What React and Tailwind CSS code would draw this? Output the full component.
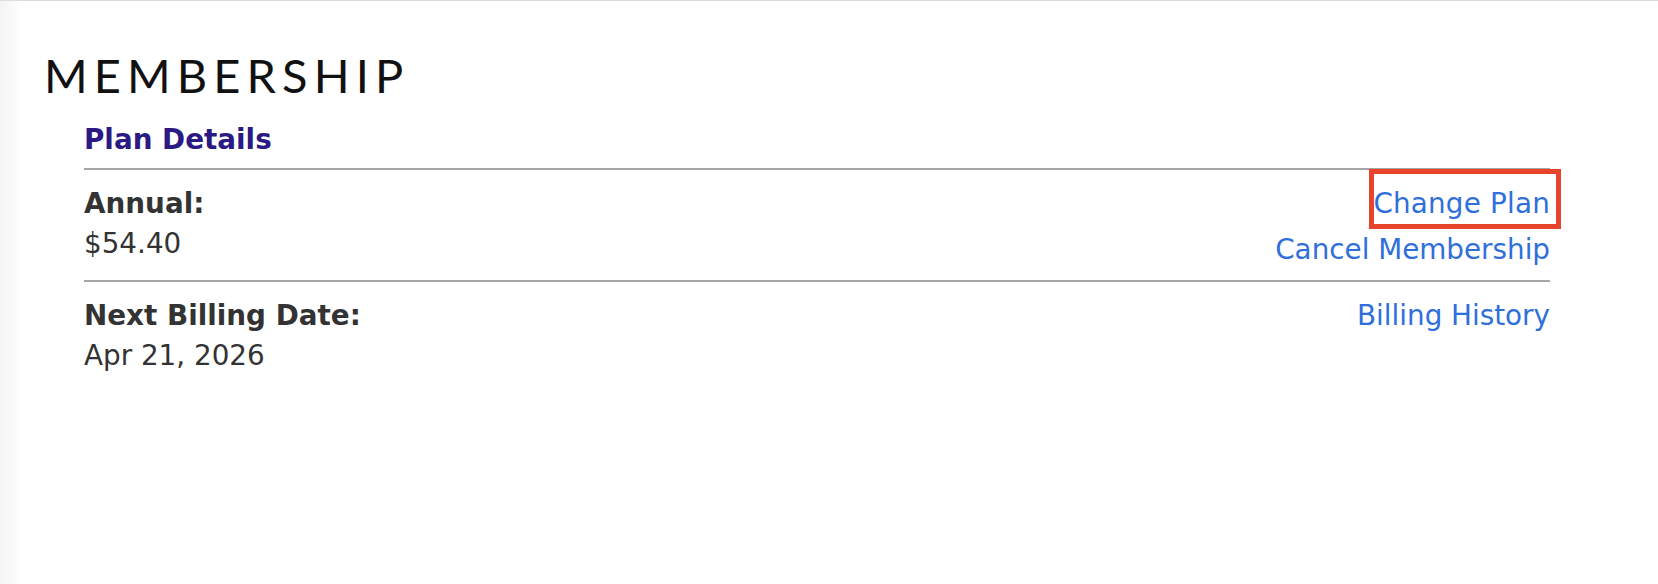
import React from 'react';

const body = { fontFamily: '"DejaVu Sans", Verdana, sans-serif' };

// one row of the plan table: label/value on the left, links on the right
const PlanRow = ({ label, value, children }) => (
    <div className="flex justify-between border-t-2 border-[#a6a6a6] pt-[14px] pb-[10px]">
        <div className="flex flex-col">
            <span className="font-bold text-[#333333]">{label}</span>
            <span className="text-[#333333]">{value}</span>
        </div>
        <div className="flex flex-col items-end gap-[6px]">{children}</div>
    </div>
);

export default function App() {
    return (
        <div className="min-h-screen w-full bg-white flex border-t border-[#dcdcdc]">
            {/* side panel shadow */}
            <div className="w-[19px] shrink-0 bg-gradient-to-r from-[#f4f4f4] to-[#fdfdfd]" />

            <div className="flex-1 pl-[25px] pr-[108px]">
                <h1
                    className="mt-[51px] text-[47px] leading-none font-normal tracking-[0.13em] text-[#111111]"
                    style={{ fontFamily: 'Lato, "Open Sans", sans-serif' }}
                >
                    MEMBERSHIP
                </h1>

                <section className="ml-[40px] mt-[26px] text-[27.8px] leading-[40px]" style={body}>
                    <h2 className="leading-[30px] font-bold text-[#2b1a84] mb-[13px]">
                        Plan Details
                    </h2>

                    <PlanRow label="Annual:" value="$54.40">
                        <a href="#" className="relative tracking-[0.2px] text-[#2f6fdb]">
                            Change Plan
                            <span className="absolute -top-[15px] -bottom-[5px] -left-[4px] -right-[11px] border-[5px] border-[#e8432b] pointer-events-none" />
                        </a>
                        <a href="#" className="text-[#2f6fdb]">Cancel Membership</a>
                    </PlanRow>

                    <PlanRow label="Next Billing Date:" value="Apr 21, 2026">
                        <a href="#" className="text-[#2f6fdb]">Billing History</a>
                    </PlanRow>
                </section>
            </div>
        </div>
    );
}
